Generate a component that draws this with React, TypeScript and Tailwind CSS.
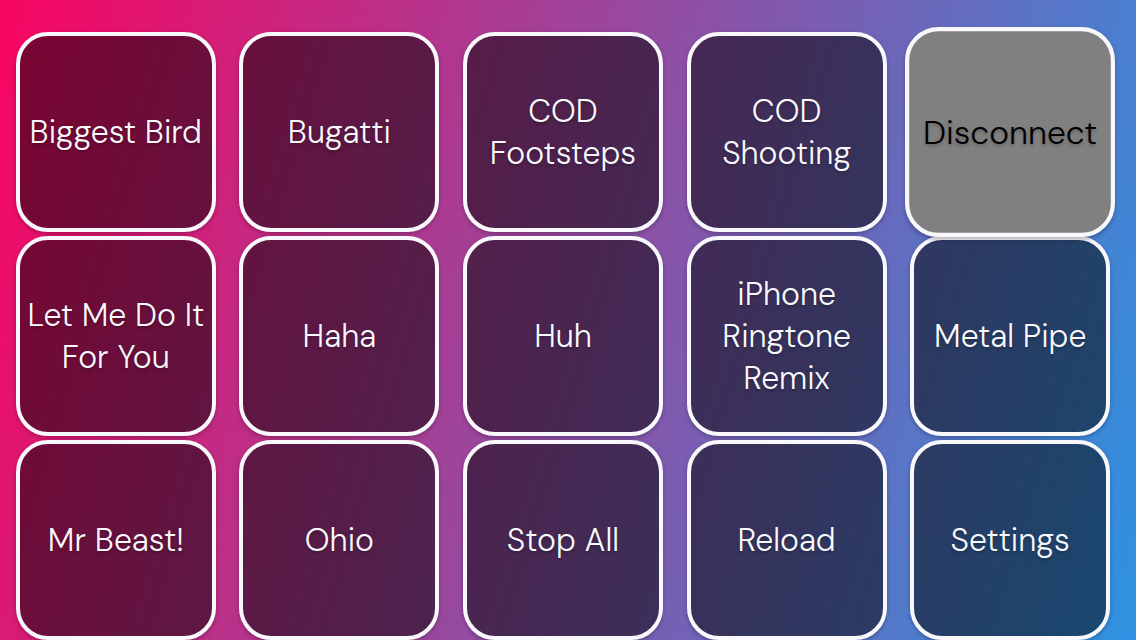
const rows: string[][] = [
  ["Biggest Bird", "Bugatti", "COD Footsteps", "COD Shooting", "Disconnect"],
  ["Let Me Do It For You", "Haha", "Huh", "iPhone Ringtone Remix", "Metal Pipe"],
  ["Mr Beast!", "Ohio", "Stop All", "Reload", "Settings"],
];

function SoundKey({ label, pressed }: { label: string; pressed: boolean }) {
  const look = pressed
    ? "relative z-10 scale-105 bg-[#808080] text-black"
    : "bg-black/50 text-[#f9f9fd]";
  return (
    <button
      type="button"
      className={`flex size-[200px] items-center justify-center rounded-[32px] border-4 border-[#f9f9fd] text-center text-[32px] leading-[42px] font-[350] shadow-[0_2px_4px_rgb(0_0_0/0.25)] text-shadow-[0_2px_3px_rgb(0_0_0/0.25)] ${look}`}
    >
      {label}
    </button>
  );
}

export default function App() {
  return (
    <main className="min-h-screen bg-[linear-gradient(107deg,#f80561_0%,#2d93e2_100%)] pt-8 pr-3.5 pl-1 font-['DM_Sans','Open_Sans',sans-serif]">
      <div className="grid grid-cols-5 gap-y-1">
        {rows.flat().map((label) => (
          <div key={label} className="flex justify-center">
            <SoundKey label={label} pressed={label === "Disconnect"} />
          </div>
        ))}
      </div>
    </main>
  );
}
